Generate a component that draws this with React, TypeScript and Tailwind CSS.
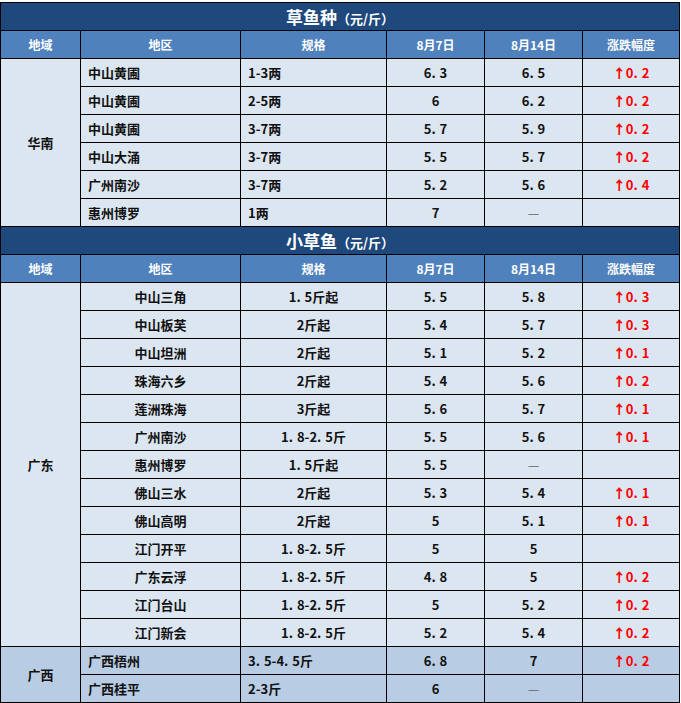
import * as React from "react";

type Row = {
  area: string;
  spec: string;
  a: string;
  b: string;
  diff?: string;
};

const fry: Row[] = [
  { area: "中山黄圃", spec: "1-3两", a: "6.3", b: "6.5", diff: "0.2" },
  { area: "中山黄圃", spec: "2-5两", a: "6", b: "6.2", diff: "0.2" },
  { area: "中山黄圃", spec: "3-7两", a: "5.7", b: "5.9", diff: "0.2" },
  { area: "中山大涌", spec: "3-7两", a: "5.5", b: "5.7", diff: "0.2" },
  { area: "广州南沙", spec: "3-7两", a: "5.2", b: "5.6", diff: "0.4" },
  { area: "惠州博罗", spec: "1两", a: "7", b: "—" },
];

const guangdong: Row[] = [
  { area: "中山三角", spec: "1.5斤起", a: "5.5", b: "5.8", diff: "0.3" },
  { area: "中山板芙", spec: "2斤起", a: "5.4", b: "5.7", diff: "0.3" },
  { area: "中山坦洲", spec: "2斤起", a: "5.1", b: "5.2", diff: "0.1" },
  { area: "珠海六乡", spec: "2斤起", a: "5.4", b: "5.6", diff: "0.2" },
  { area: "莲洲珠海", spec: "3斤起", a: "5.6", b: "5.7", diff: "0.1" },
  { area: "广州南沙", spec: "1.8-2.5斤", a: "5.5", b: "5.6", diff: "0.1" },
  { area: "惠州博罗", spec: "1.5斤起", a: "5.5", b: "—" },
  { area: "佛山三水", spec: "2斤起", a: "5.3", b: "5.4", diff: "0.1" },
  { area: "佛山高明", spec: "2斤起", a: "5", b: "5.1", diff: "0.1" },
  { area: "江门开平", spec: "1.8-2.5斤", a: "5", b: "5" },
  { area: "广东云浮", spec: "1.8-2.5斤", a: "4.8", b: "5", diff: "0.2" },
  { area: "江门台山", spec: "1.8-2.5斤", a: "5", b: "5.2", diff: "0.2" },
  { area: "江门新会", spec: "1.8-2.5斤", a: "5.2", b: "5.4", diff: "0.2" },
];

const guangxi: Row[] = [
  { area: "广西梧州", spec: "3.5-4.5斤", a: "6.8", b: "7", diff: "0.2" },
  { area: "广西桂平", spec: "2-3斤", a: "6", b: "—" },
];

// the source font gives the decimal point a wide advance
function Num({ v }: { v: string }) {
  const parts = v.split(".");
  return (
    <>
      {parts.map((p, i) => (
        <React.Fragment key={i}>
          {i > 0 && <span className="mr-[4px]">.</span>}
          {p}
        </React.Fragment>
      ))}
    </>
  );
}

function Value({ v }: { v: string }) {
  if (v === "—") return <span className="font-normal text-[#666]">—</span>;
  return <Num v={v} />;
}

const td = "border border-black h-[28px] p-0";

function Title({ name }: { name: string }) {
  return (
    <tr className="h-[28px]">
      <td colSpan={6} className="border border-black bg-[#1f497d] text-center text-white p-0">
        <span className="text-[17px] font-bold">{name}</span>
        <span className="text-[13px] font-bold">（元/斤）</span>
      </td>
    </tr>
  );
}

function Head() {
  const cols = ["地域", "地区", "规格", "8月7日", "8月14日", "涨跌幅度"];
  return (
    <tr className="h-[28px]">
      {cols.map((c) => (
        <td key={c} className={`${td} bg-[#4f81bd] text-white text-center text-[12px] font-bold`}>
          {c}
        </td>
      ))}
    </tr>
  );
}

function Body({
  region,
  rows,
  center,
  bg,
}: {
  region: string;
  rows: Row[];
  center: boolean;
  bg: string;
}) {
  const align = center ? "text-center" : "text-left pl-[7px]";
  return (
    <>
      {rows.map((r, i) => (
        <tr key={i} className={bg}>
          {i === 0 && (
            <td rowSpan={rows.length} className={`${td} text-center`}>
              {region}
            </td>
          )}
          <td className={`${td} ${align}`}>{r.area}</td>
          <td className={`${td} ${align}`}>
            <Num v={r.spec} />
          </td>
          <td className={`${td} text-center`}>
            <Value v={r.a} />
          </td>
          <td className={`${td} text-center`}>
            <Value v={r.b} />
          </td>
          <td className={`${td} text-center text-[#ff0000]`}>
            {r.diff && (
              <>
                <span className="font-black">↑</span>
                <Num v={r.diff} />
              </>
            )}
          </td>
        </tr>
      ))}
    </>
  );
}

export default function App() {
  return (
    <div className="bg-white pt-[2px] w-[681px] h-[703px] overflow-hidden">
      <table
        className="table-fixed border-collapse w-[679px] text-[13px] font-bold text-[#111] leading-none"
        style={{ fontFamily: '"Noto Sans CJK SC", "Liberation Sans", sans-serif' }}
      >
        <colgroup>
          <col className="w-[80px]" />
          <col className="w-[160px]" />
          <col className="w-[146px]" />
          <col className="w-[98px]" />
          <col className="w-[98px]" />
          <col className="w-[97px]" />
        </colgroup>
        <tbody>
          <Title name="草鱼种" />
          <Head />
          <Body region="华南" rows={fry} center={false} bg="bg-[#dce6f1]" />
          <Title name="小草鱼" />
          <Head />
          <Body region="广东" rows={guangdong} center={true} bg="bg-[#dce6f1]" />
          <Body region="广西" rows={guangxi} center={false} bg="bg-[#b8cce4]" />
        </tbody>
      </table>
    </div>
  );
}
